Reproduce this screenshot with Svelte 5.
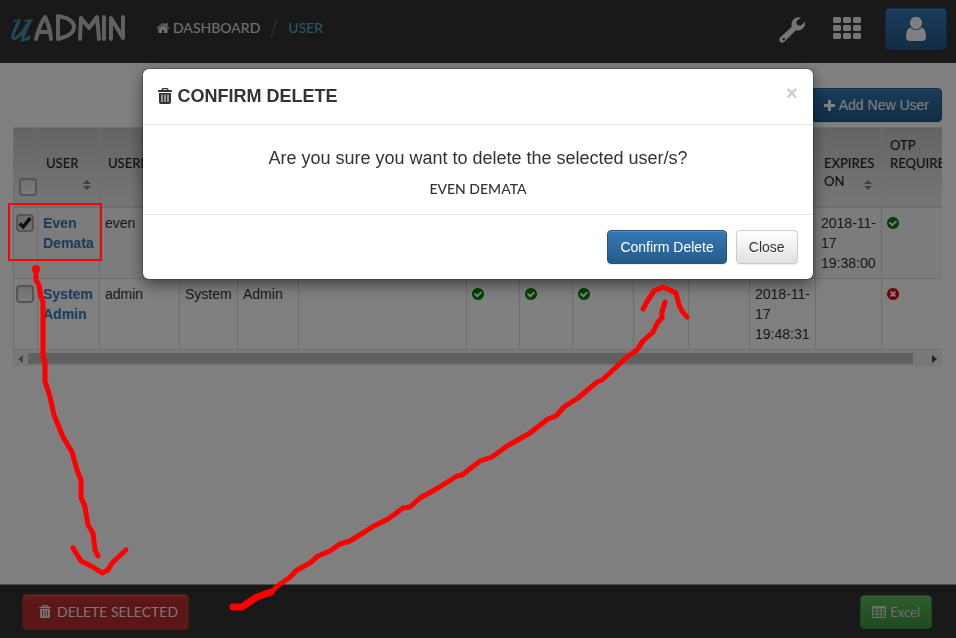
<script>
  const P = {
    home: 'M1472 992v480q0 26-19 45t-45 19h-384v-384h-256v384h-384q-26 0-45-19t-19-45v-480q0-1 .5-3t.5-3l575-474 575 474q1 2 1 6zm223-69l-62 74q-8 9-21 11h-3q-13 0-21-7l-692-577-692 577q-12 8-24 7-13-2-21-11l-62-74q-8-10-7-23.5t11-21.5l719-599q32-26 76-26t76 26l244 204v-195q0-14 9-23t23-9h192q14 0 23 9t9 23v408l219 182q10 8 11 21.5t-7 23.5z',
    ok: 'M1412 734q0-28-18-46l-91-90q-19-19-45-19t-45 19l-408 407-226-226q-19-19-45-19t-45 19l-91 90q-18 18-18 46 0 27 18 45l362 362q19 19 45 19 27 0 46-19l543-543q18-18 18-45zm252 162q0 209-103 385.5t-279.5 279.5-385.5 103-385.5-103-279.5-279.5-103-385.5 103-385.5 279.5-279.5 385.5-103 385.5 103 279.5 279.5 103 385.5z',
    no: 'M1277 1122q0-26-19-45l-181-181 181-181q19-19 19-45 0-27-19-46l-90-90q-19-18-46-18-26 0-45 18l-181 181-181-181q-19-18-45-18-27 0-46 18l-90 90q-18 19-18 46 0 26 18 45l181 181-181 181q-18 19-18 45 0 27 18 46l90 90q19 18 46 18 26 0 45-18l181-181 181 181q19 18 45 18 27 0 46-18l90-90q19-19 19-46zm387-226q0 209-103 385.5t-279.5 279.5-385.5 103-385.5-103-279.5-279.5-103-385.5 103-385.5 279.5-279.5 385.5-103 385.5 103 279.5 279.5 103 385.5z'
  };

  const columns = [
    { w: 62, label: 'USER' },
    { w: 80, label: 'USERNAME' },
    { w: 58, label: '' },
    { w: 61, label: '' },
    { w: 168, label: '' },
    { w: 53, label: '' },
    { w: 53, label: '' },
    { w: 61, label: '' },
    { w: 55, label: '' },
    { w: 61, label: '' },
    { w: 66, label: '' },
    { w: 66, label: 'EXPIRES ON', beside: true },
    { w: 82, label: 'OTP REQUIRED' }
  ];

  let rows = $state([
    { name: 'Even Demata', checked: true, cells: ['even', '', '', '', '', '', '', '', '', '', '2018-11-17 19:38:00', 'ok'] },
    { name: 'System Admin', checked: false, cells: ['admin', 'System', 'Admin', '', 'ok', 'ok', 'ok', '', '', '2018-11-17 19:48:31', '', 'no'] }
  ]);
</script>

{#snippet trash()}
  <svg class="trash" viewBox="0 0 14 16" aria-hidden="true">
    <path fill="currentColor" fill-rule="evenodd" d="M5 0h4q1.500 0 1.500 1.500V2H13q1 0 1 1v1H0V3q0-1 1-1h2.500v-.5Q3.500 0 5 0zM5 1.200V2h4v-.8zM1 5h12v9q0 2-2 2H3q-2 0-2-2zM3.500 6.500v7.500h1V6.500zM6.500 6.500v7.500h1V6.500zM9.500 6.500v7.500h1V6.500z" />
  </svg>
{/snippet}

<div class="page">
  <header class="topbar">
    <a class="logo" href="#home" aria-label="uAdmin">
      <svg viewBox="0 0 116 30" fill="none" stroke-linecap="round" stroke-linejoin="round" aria-hidden="true">
        <g stroke="#4690b5">
          <path stroke-width="3" d="M9 8Q5 16 3 22q-1 4 3 3 6-4 11-13" />
          <path stroke-width="3" d="M20 8q-4 8-7 16-1 4 3 2l3-2" />
          <path stroke-width="1.500" d="M4 8l6-1M15 8l7-1M1 24l4 3M11 28l8-2" />
        </g>
        <g stroke="#c0c0c0" stroke-width="4">
          <path d="M26 26Q29 13 35 4q5 10 6 22M28 19h11" />
          <path d="M48 26V3q16 3 16 11 0 8-16 12" />
          <path d="M70 26l1-21 8 10 8-11 2 22" />
          <path d="M94 4v22" />
          <path d="M101 26V5l12 20V4" />
        </g>
      </svg>
    </a>
    <nav>
      <a class="crumb" href="#dashboard"><svg class="home" viewBox="0 0 1792 1792" aria-hidden="true"><path fill="currentColor" d={P.home} /></svg>DASHBOARD</a>
      <svg class="slash" viewBox="0 0 8 22" aria-hidden="true"><path stroke="#555" stroke-width="1.500" d="M7 1L1 21" /></svg>
      <a class="crumb current" href="#user">USER</a>
    </nav>
    <div class="tools">
      <button class="plain" aria-label="Settings">
        <svg width="28" height="28" viewBox="0 0 28 28" aria-hidden="true">
          <path fill="currentColor" fill-rule="evenodd" d="M22 .5q-4.500-1-7.500 2-2.800 3-1.600 7L1.200 20.500q-2 2.200 0 4.200t4.200 0L16.800 13.300q4.200 1 7-1.800 2.800-2.800 2.600-7l-4.800 4.300-3.400-.8-1-3.600zM3.800 21l1.700-.3.700 1.500-1.200 1.400-1.700-.5z" />
        </svg>
      </button>
      <button class="plain" aria-label="Applications">
        <svg width="30" height="22" viewBox="-2 0 30 22" fill="currentColor" aria-hidden="true">
          {#each [0, 8, 16] as y}{#each [0, 10, 20] as x}<rect {x} {y} width="8" height="6" rx="1.500" />{/each}{/each}
        </svg>
      </button>
      <button class="btn primary profile" aria-label="Profile">
        <svg width="20" height="24" viewBox="0 0 20 24" fill="currentColor" aria-hidden="true">
          <ellipse cx="10" cy="6" rx="6" ry="6.200" />
          <path d="M4.200 10.600q5.800 5 11.600 0 4.200 1.600 4.200 9 0 4.400-4 4.400H4q-4 0-4-4.400 0-7.400 4.200-9z" />
        </svg>
      </button>
    </div>
  </header>

  <main>
    <div class="actions">
      <button class="btn primary"><svg class="plus" viewBox="0 0 11 11" aria-hidden="true"><path fill="currentColor" d="M4 0h3v4h4v3H7v4H4V7H0V4h4z" /></svg>Add New User</button>
    </div>
    <div class="scroller">
      <table>
        <colgroup>
          <col style:width="24px" />
          {#each columns as c}<col style:width="{c.w}px" />{/each}
        </colgroup>
        <thead>
          <tr>
            <th class="pick"><input type="checkbox" aria-label="Select all" /></th>
            {#each columns as c}
              <th>
                <div class={['head', { beside: c.beside }]}>
                  <span>{c.label}</span>
                  <svg width="8" height="10" viewBox="0 0 8 10" aria-hidden="true"><path fill="#808080" d="M0 4l4-4 4 4zM0 6h8l-4 4z" /></svg>
                </div>
              </th>
            {/each}
          </tr>
        </thead>
        <tbody>
          {#each rows as row}
            <tr>
              <td class="pick"><input type="checkbox" bind:checked={row.checked} aria-label="Select {row.name}" /></td>
              <td><a href="#edit">{row.name}</a></td>
              {#each row.cells as cell}
                <td>
                  {#if cell === 'ok' || cell === 'no'}
                    <svg class={['state', cell]} viewBox="128 128 1536 1536" role="img" aria-label={cell}><path fill="currentColor" d={P[cell]} /></svg>
                  {:else}{cell}{/if}
                </td>
              {/each}
            </tr>
          {/each}
        </tbody>
      </table>
    </div>
    <div class="scrollbar" aria-hidden="true">
      <svg viewBox="0 0 15 15"><path fill="#888" d="M10 4v8L5 8z" /></svg>
      <div class="track"><div class="thumb"></div></div>
      <svg viewBox="0 0 15 15"><path fill="#444" d="M5 4v8l5-4z" /></svg>
    </div>
  </main>

  <footer class="bottombar">
    <button class="btn danger">{@render trash()}DELETE SELECTED</button>
    <button class="btn success">
      <svg class="grid" viewBox="0 0 14 12" aria-hidden="true"><path fill="currentColor" fill-rule="evenodd" d="M1 0h12q1 0 1 1v10q0 1-1 1H1q-1 0-1-1V1q0-1 1-1zM1 2.500v2h3.400v-2zm4.300 0v2h3.400v-2zm4.300 0v2H13v-2zM1 5.500v2h3.400v-2zm4.300 0v2h3.400v-2zm4.300 0v2H13v-2zM1 8.500V11h3.400V8.500zm4.300 0V11h3.400V8.500zm4.300 0V11H13V8.500z" /></svg>Excel
    </button>
  </footer>
</div>

<div class="backdrop">
  <div class="modal" role="dialog" aria-modal="true" aria-labelledby="modal-title">
    <div class="modal-header">
      <h4 id="modal-title">{@render trash()}CONFIRM DELETE</h4>
      <button class="close" aria-label="Dismiss">×</button>
    </div>
    <div class="modal-body">
      <p class="question">Are you sure you want to delete the selected user/s?</p>
      <p class="who">EVEN DEMATA</p>
    </div>
    <div class="modal-footer">
      <button class="btn primary">Confirm Delete</button>
      <button class="btn default">Close</button>
    </div>
  </div>
</div>

<svg class="notes" width="956" height="638" viewBox="0 0 956 638" fill="none" stroke="#f00" stroke-linecap="round" stroke-linejoin="round" aria-hidden="true">
  <rect x="9" y="204" width="92" height="56" stroke-width="2" stroke-linejoin="miter" />
  <circle cx="36" cy="269" r="4" fill="#f00" stroke="none" />
  <g stroke-width="5">
    <path d="M36 269L36 280L39 285L41 297L43 302L43 357L45 362L45 381L50 397L54 415L63 437L72 452L77 470L81 480L81 497L85 507L88 525L93 533L95 550L98 556" />
    <path d="M73 548L81 561L93 567L102 573L108 570L112 563L126 550" />
    <path d="M271 592L280 584L289 578L297 570L310 563L318 556L330 551L340 544L350 541L363 533L372 527L388 519L395 514L403 508L410 507L420 498L438 488L457 476L462 475L480 461L492 457L507 446L530 433L548 419L556 416L564 407L578 398L597 382L602 380L612 371L627 357L637 350L643 341L653 332L658 322L662 318L662 312L665 302" />
    <path d="M643 309L648 300L654 291L663 287L670 290L676 293L679 305L682 311L687 317" />
  </g>
  <path stroke-width="7" d="M233 607L242 607L257 597L271 592" />
</svg>

<style>
  :global(body) { background: #fff; }
  .page, .backdrop { font: 14px/20px 'Liberation Sans', Arial, sans-serif; color: #333; }
  .page { display: flex; flex-direction: column; min-height: 100vh; overflow: hidden; }
  * { box-sizing: border-box; }
  a { text-decoration: none; }

  .topbar { display: flex; align-items: flex-start; height: 63px; padding: 8px 9px 0 10px; background: #333; }
  .logo { padding-top: 5px; }
  .logo svg { display: block; width: 116px; height: 30px; }
  nav { display: flex; align-items: center; gap: 10px; height: 40px; margin-left: 30px; }
  .crumb { display: flex; align-items: center; gap: 3px; font: 500 14px/20px Lato, sans-serif; color: #ddd; }
  .current { color: #4fa8d0; }
  .home { width: 14px; height: 14px; }
  .slash { width: 8px; height: 22px; }
  .tools { display: flex; align-items: flex-start; gap: 24px; margin-left: auto; color: #eaeaea; }
  .plain { display: flex; padding: 9px 0 0; border: 0; background: none; color: inherit; }
  .plain svg { display: block; }

  .btn { display: inline-flex; align-items: center; justify-content: center; gap: 4px; height: 34px; padding: 0 12px; border: 1px solid; border-radius: 4px; font: inherit; white-space: nowrap; box-shadow: inset 0 1px 0 rgba(255, 255, 255, .15), 0 1px 1px rgba(0, 0, 0, .075); }
  .primary { color: #fff; background: linear-gradient(#337ab7, #265a88); border-color: #245580; }
  .default { color: #333; background: linear-gradient(#fff, #e0e0e0); border-color: #ccc; text-shadow: 0 1px 0 #fff; }
  .danger { height: 36px; gap: 6px; padding: 0 10px 0 16px; color: #eee; background: linear-gradient(#c93434, #b92c2c 30%); border-color: #8a3a20; font: 14px/20px Lato, sans-serif; }
  .success { padding: 0 11px; color: #ddd; background: linear-gradient(#5cb85c, #419641); border-color: #3e8f3e; font: 13px/20px Lato, sans-serif; }
  .profile { width: 62px; height: 42px; }

  main { flex: 1; padding: 25px 14px 0 13px; }
  .actions { display: flex; justify-content: flex-end; margin-bottom: 5px; }
  .plus { width: 11px; height: 11px; }
  .scroller { overflow: hidden; }
  table { width: 950px; table-layout: fixed; border-collapse: collapse; }
  th, td { border: 1px solid #ddd; padding: 5px; text-align: left; vertical-align: top; }
  thead tr { background: linear-gradient(#c8c8c8, #eee); }
  th { height: 79px; padding: 6px 8px 16px; border-bottom: 2px solid #ddd; vertical-align: bottom; font: 500 13px/18px Lato, sans-serif; color: #222; }
  td { height: 71px; }
  tbody tr:nth-child(odd) { background: #f9f9f9; }
  td a { font-weight: bold; color: #337ab7; }
  .head { display: flex; flex-direction: column; gap: 8px; }
  .head svg { flex: none; align-self: flex-end; }
  .beside { flex-direction: row; gap: 0; margin-right: -8px; }
  .beside span { flex: none; width: 40px; }
  .pick { padding: 6px 2px; }
  th.pick { padding: 10px 5px; }
  .pick input { display: block; appearance: none; width: 18px; height: 18px; margin: 0; border: 2px solid #aaa; border-radius: 4px; background: linear-gradient(#e0e0e0, #f8f8f8); }
  .pick input:checked { background: url("data:image/svg+xml,%3Csvg xmlns='http://www.w3.org/2000/svg' viewBox='0 0 16 16'%3E%3Cpath fill='none' stroke='%23222' stroke-width='4' d='M2 8.500l4 4 8-10'/%3E%3C/svg%3E") center / 100% no-repeat #ddd; }
  .state { display: block; width: 12px; height: 12px; margin: 4px 0; }
  .ok { color: #008000; }
  .no { color: #d9000f; }
  .scrollbar { display: flex; height: 15px; margin-top: 1px; background: #f0f0f0; }
  .scrollbar svg { width: 15px; height: 15px; }
  .track { flex: 1; padding: 2px 0; }
  .thumb { width: calc(100% - 14px); height: 11px; background: #c1c1c1; }

  .bottombar { display: flex; justify-content: space-between; align-items: center; height: 54px; padding: 0 24px 0 22px; border-top: 1px solid #999; background: #333; }
  .trash { width: 14px; height: 16px; }
  .danger .trash { width: 12px; height: 13px; }
  .grid { width: 14px; height: 12px; }

  .backdrop { position: fixed; inset: 0; background: rgba(0, 0, 0, .5); }
  .modal { width: 70%; margin: 69px auto 0; border-radius: 6px; background: #fff; box-shadow: 0 0 0 1px rgba(0, 0, 0, .2), 0 5px 15px rgba(0, 0, 0, .5); }
  .modal-header { display: flex; justify-content: space-between; align-items: flex-start; padding: 15px 15px 16px; border-bottom: 1px solid #e5e5e5; }
  h4 { display: flex; align-items: center; gap: 5px; margin: 0; font-size: 18px; line-height: 24px; }
  .close { padding: 0; border: 0; background: none; font: bold 20px/18px 'Liberation Sans', Arial, sans-serif; color: #ccc; }
  .modal-body { padding: 20px 15px 15px; text-align: center; }
  p { margin: 0; }
  .question { font-size: 18px; line-height: 26px; }
  .who { margin-top: 8px; font: 500 14px/20px Lato, sans-serif; }
  .modal-footer { display: flex; justify-content: flex-end; gap: 9px; padding: 15px; border-top: 1px solid #e5e5e5; }
  .notes { position: absolute; top: 0; left: 0; pointer-events: none; }
</style>
